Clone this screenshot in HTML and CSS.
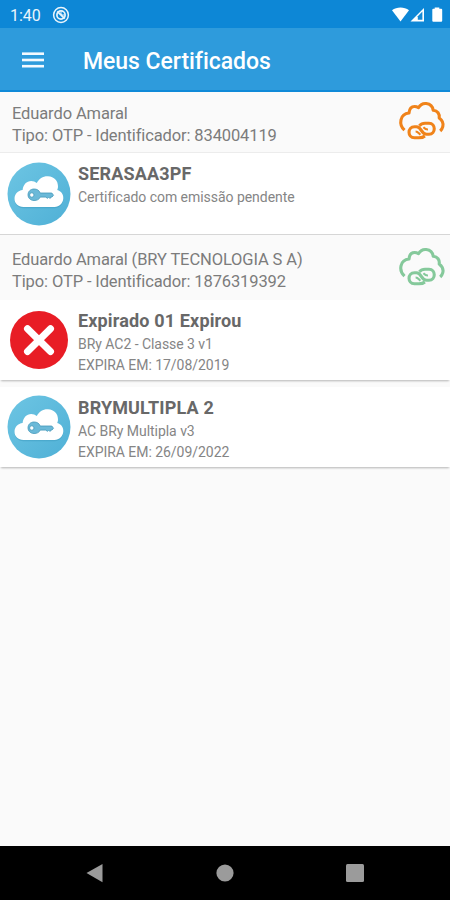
FILE: index.html
```html
<!DOCTYPE html>
<html lang="pt-BR">
<head>
    <meta charset="UTF-8">
    <meta name="viewport" content="width=device-width, initial-scale=1.0">
    <title>Meus Certificados</title>
    <link rel="stylesheet" href="styles.css">
</head>
<body>

    <!-- Shared icons -->
    <svg class="icon-defs" width="0" height="0">
        <defs>
            <linearGradient id="badge-fill" x1="0" y1="0" x2="1" y2="1">
                <stop offset="0" stop-color="#6dc5e3"/>
                <stop offset="1" stop-color="#4fb0d6"/>
            </linearGradient>
        </defs>
        <symbol id="cloud-link" viewBox="0 0 48 42">
            <g fill="none" stroke="currentColor" stroke-width="3.1" stroke-linejoin="round">
                <path d="M6.5 30.2C3.4 27.3 2.2 23.5 3 19.8C3.9 15.7 6.8 13.4 11 13C11.4 8.7 13.4 6.5 16.6 6.5C18.2 6.5 19.4 7 20.5 7.7C22.4 4.5 25 3.1 28.2 3.5C32.2 4 34.7 6.4 35.2 10.2C39.6 10.7 41.8 13.8 41.2 18C44.6 20.6 45.6 23.5 44.8 26.6C44.3 28.5 43.3 30 42.2 31"/>
                <path d="M26.8 36C25.3 37.4 23.4 37.8 21 37.8L16.5 37.8C9.2 37.8 9.2 26.7 16.5 26.7L18.5 26.7C23.8 26.7 22.8 34.2 28.6 34.2L31 34.2C38 34.2 38 23.3 31 23.3L27 23.3C24.4 23.3 22.7 24.2 21.4 25.7"/>
                <path d="M17.6 31.4C20 31.4 20.8 33.4 22.4 34.8" stroke-width="2"/>
                <path d="M25.4 27.3C26.8 28.8 27.7 29.7 30 29.6" stroke-width="2"/>
            </g>
        </symbol>
        <symbol id="cloud-key" viewBox="0 0 64 64">
            <circle cx="32" cy="32" r="31.5" fill="url(#badge-fill)"/>
            <path d="M16.5 46.2C11 46.2 7.5 42.3 7.5 37.6C7.5 32.8 11 29.3 15.6 28.8C16 23.3 19.6 19.6 24.2 19.6C26.4 19.6 28.2 20.3 29.8 21.7C32 17 36 14.5 41 14.7C47.2 15 51.4 19.7 51 25.7C50.9 26.8 50.7 27.8 50.3 28.8C54 29.8 56.6 33.3 56.3 37.4C56 42.2 52.3 46.2 47.5 46.2Z" fill="#3d9bc0" opacity=".5"/>
            <path d="M16.5 45C11 45 7.5 41.3 7.5 36.8C7.5 32.2 11 28.6 15.6 28.1C16 22.8 19.6 18.9 24.2 18.9C26.4 18.9 28.2 19.6 29.8 21C32 16.5 36 14 41 14.2C47.2 14.5 51.4 19 51 25C50.9 26.1 50.7 27.1 50.3 28.1C54 29.1 56.6 32.5 56.3 36.5C56 41.2 52.3 45 47.5 45Z" fill="#fff"/>
            <path fill="#6bb9d8" stroke="#4298ba" stroke-width=".8" fill-rule="evenodd" d="M27 27C30 27 32.2 28.2 33.2 31L44.8 31L46.5 33.2L45 35.1L43.7 35.1L43 36.5L41.7 35.1L40.4 36.4L39 35.1L33.2 35.1C32.2 37.5 30 38.5 27 38.5C23.5 38.5 21 36 21 32.8C21 29.5 23.5 27 27 27ZM24.8 30.8A2.2 2.2 0 1 0 24.8 35.2A2.2 2.2 0 1 0 24.8 30.8Z"/>
        </symbol>
        <symbol id="expired" viewBox="0 0 64 64">
            <circle cx="32" cy="32" r="29" fill="#e81d25"/>
            <path d="M20.5 20.7L43.5 43.5M43.5 20.7L20.5 43.5" stroke="#fff" stroke-width="7" stroke-linecap="round"/>
        </symbol>
    </svg>

    <!-- Status bar -->
    <div class="status-bar">
        <span class="clock">1:40</span>
        <svg class="status-app" width="18" height="18" viewBox="0 0 18 18" fill="none" stroke="#eaf5fc">
            <circle cx="9" cy="9" r="7.4" stroke-width="1.5"/>
            <circle cx="9" cy="9" r="4.1" stroke-width="1.7"/>
            <path d="M5.3 5.3L12.7 12.7" stroke-width="1.8"/>
            <path d="M9 9V5.5M9 9H12.5" stroke-width="1"/>
        </svg>
        <svg class="status-signal" width="52" height="16" viewBox="0 0 52 16">
            <path d="M0 3.2C4.7-.3 12.3-.3 17 3.2L8.5 14.5Z" fill="#fff"/>
            <path d="M18.5 14.5L32 1V14.5Z" fill="#fff"/>
            <path d="M25.8 12.8V9.2L30.4 4.6V12.8Z" fill="#168bd6"/>
            <path d="M42.7 .6H47.3V1.8H49.2Q50.2 1.8 50.2 2.8V13.8Q50.2 14.8 49.2 14.8H41.3Q40.3 14.8 40.3 13.8V2.8Q40.3 1.8 41.3 1.8H42.7Z" fill="#fff"/>
        </svg>
    </div>

    <!-- App bar -->
    <header class="app-bar">
        <svg class="menu" width="22" height="16" viewBox="0 0 22 16" fill="#f4faff">
            <rect width="22" height="2.6" y=".4"/>
            <rect width="22" height="2.6" y="6.7"/>
            <rect width="22" height="2.6" y="12.9"/>
        </svg>
        <h1>Meus Certificados</h1>
    </header>

    <main class="content">
        <section class="group">
            <div class="group-header">
                <div class="group-text">
                    <p>Eduardo Amaral</p>
                    <p>Tipo: OTP - Identificador: 834004119</p>
                </div>
                <svg class="link-icon pending"><use href="#cloud-link"/></svg>
            </div>
            <article class="card card-tall">
                <svg class="badge"><use href="#cloud-key"/></svg>
                <div class="card-text">
                    <h2>SERASAA3PF</h2>
                    <p>Certificado com emissão pendente</p>
                </div>
            </article>
        </section>

        <section class="group">
            <div class="group-header group-header-tall">
                <div class="group-text">
                    <p>Eduardo Amaral (BRY TECNOLOGIA S A)</p>
                    <p>Tipo: OTP - Identificador: 1876319392</p>
                </div>
                <svg class="link-icon active"><use href="#cloud-link"/></svg>
            </div>
            <article class="card">
                <svg class="badge"><use href="#expired"/></svg>
                <div class="card-text">
                    <h2>Expirado 01 Expirou</h2>
                    <p>BRy AC2 - Classe 3 v1</p>
                    <p>EXPIRA EM: 17/08/2019</p>
                </div>
            </article>
            <article class="card card-spaced">
                <svg class="badge"><use href="#cloud-key"/></svg>
                <div class="card-text">
                    <h2>BRYMULTIPLA 2</h2>
                    <p>AC BRy Multipla v3</p>
                    <p>EXPIRA EM: 26/09/2022</p>
                </div>
            </article>
        </section>
    </main>

    <!-- Android navigation -->
    <nav class="nav-bar">
        <svg width="20" height="20" viewBox="0 0 20 20"><path d="M1.5 10L17.5 1V19.3Z" fill="#9b9b9b"/></svg>
        <svg width="20" height="20" viewBox="0 0 20 20"><circle cx="10" cy="10" r="8.6" fill="#9b9b9b"/></svg>
        <svg width="20" height="20" viewBox="0 0 20 20"><rect x="1" y="1" width="18" height="18" rx="1.5" fill="#9b9b9b"/></svg>
    </nav>

</body>
</html>
```

FILE: styles.css
```css
/* General Styles */
* {
    box-sizing: border-box;
}

body {
    font-family: Roboto, sans-serif;
    margin: 0;
    height: 900px;
    background: #fafafa;
    color: #7c7c7c;
    display: flex;
    flex-direction: column;
    overflow: hidden;
    white-space: nowrap;
}

h1, h2, p {
    margin: 0;
}

svg {
    display: block;
    flex: none;
}

.icon-defs {
    position: absolute;
}

/* Status bar */
.status-bar {
    height: 28px;
    flex: none;
    background: #0d87d6;
    display: flex;
    align-items: center;
    padding: 1px 6px 0 10px;
}

.clock {
    width: 42px;
    font-size: 16px;
    color: #eaf5fc;
    padding-top: 1px;
}

.status-signal {
    margin-left: auto;
}

/* App bar */
.app-bar {
    height: 64px;
    flex: none;
    background: #2e9bdc;
    border-bottom: 2px solid #0f8ad8;
    display: flex;
    align-items: center;
    gap: 39px;
    padding: 1px 22px 0;
}

.app-bar h1 {
    font-size: 23px;
    line-height: 28px;
    font-weight: 500;
    color: #fff;
    padding-top: 4px;
    letter-spacing: -0.05px;
}

/* Groups */
.content {
    flex: 1;
}

.group-header {
    height: 61px;
    display: flex;
    justify-content: space-between;
    padding: 10px 4px 0 12px;
    border-bottom: 1px solid #ececec;
    background: #fafafa;
    font-size: 16.5px;
    letter-spacing: -0.12px;
    line-height: 22px;
}

.group-header-tall {
    height: 65px;
    padding-top: 13px;
    border-bottom: none;
}

.group-text {
    padding-top: 1px;
}

.link-icon {
    width: 48px;
    height: 42px;
    margin-top: -2px;
}

.pending {
    color: #f0831a;
}

.active {
    color: #85c99b;
}

/* Certificate cards */
.card {
    height: 80px;
    display: flex;
    gap: 7px;
    padding: 8px 7px 0;
    background: #fff;
    box-shadow: 0 2px 2px -1px rgba(0, 0, 0, 0.28);
}

.card-tall {
    height: 81px;
    margin-bottom: 1px;
    box-shadow: 0 1px 1px rgba(0, 0, 0, 0.14);
}

.card-spaced {
    margin-top: 7px;
}

.badge {
    width: 64px;
    height: 64px;
}

.card-tall .badge {
    margin-top: 1px;
}

.card-text {
    padding-top: 1px;
}

.card h2 {
    font-size: 18px;
    line-height: 24px;
    font-weight: 700;
    letter-spacing: 0.15px;
    color: #686868;
    margin-bottom: 1px;
}

.card p {
    font-size: 14px;
    line-height: 21px;
    letter-spacing: -0.04px;
    color: #858585;
}

/* Android navigation */
.nav-bar {
    height: 54px;
    flex: none;
    background: #000;
    display: flex;
    justify-content: space-between;
    align-items: center;
    padding: 0 85px;
}
```
